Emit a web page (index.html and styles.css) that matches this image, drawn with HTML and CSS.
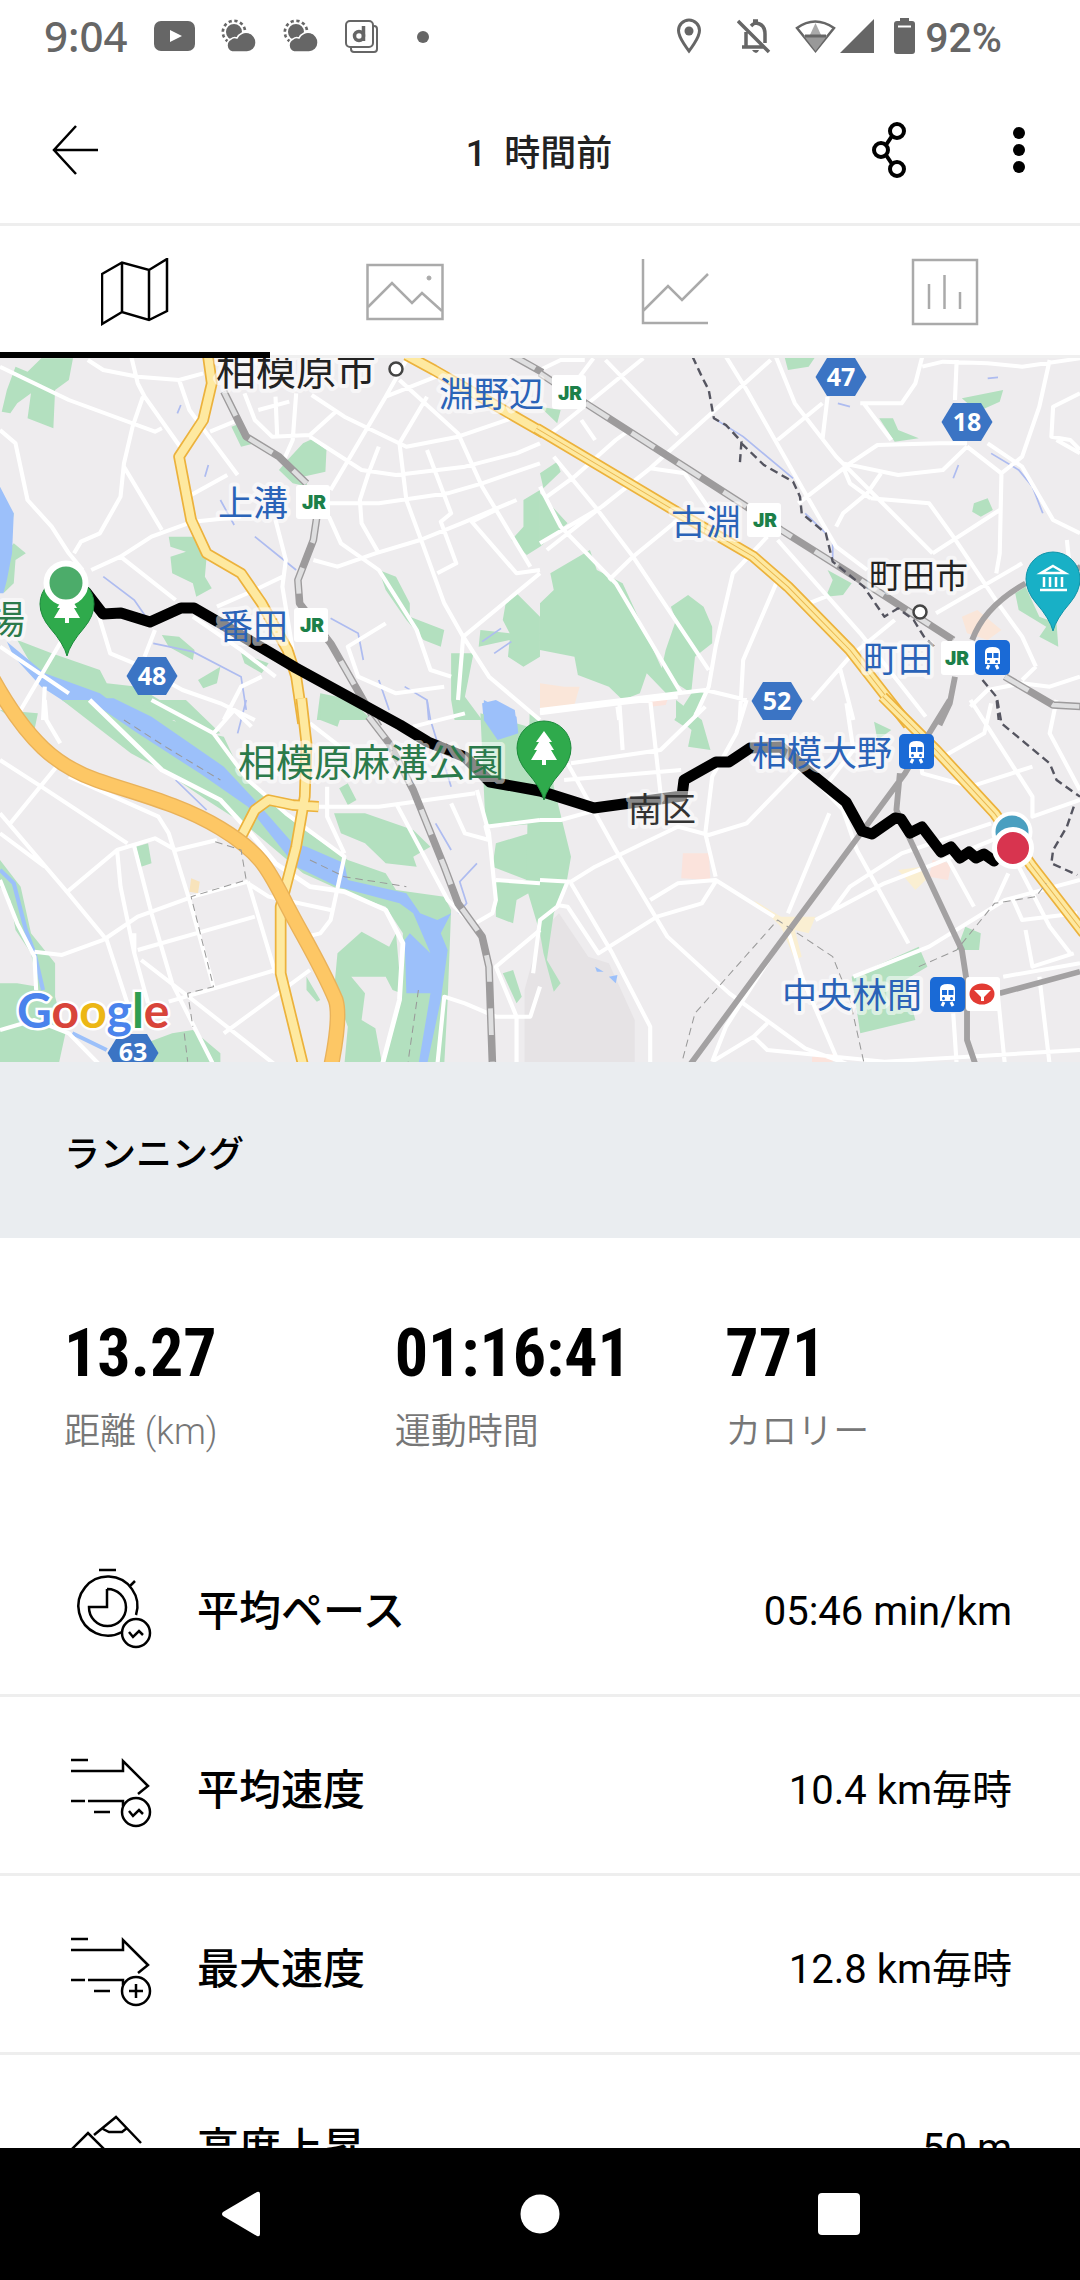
FILE: index.html
```html
<!DOCTYPE html>
<html lang="ja">
<head>
<meta charset="utf-8">
<meta name="viewport" content="width=device-width">
<title>ランニング</title>
<link rel="stylesheet" href="styles.css">
</head>
<body>
<div class="status">
  <div class="status-left">
    <span class="clock">9:04</span>
    <svg width="41" height="32" viewBox="0 0 41 32"><rect y="1" width="41" height="30" rx="7" fill="#666"/><path d="M16 10L28 16L16 22Z" fill="#fff"/></svg>
    <svg width="36" height="34" viewBox="0 0 36 34"><circle cx="13" cy="13" r="10.500" fill="none" stroke="#666" stroke-width="4" stroke-dasharray="3 2.500"/><circle cx="13" cy="13" r="9" fill="#666" stroke="#fff" stroke-width="2"/><path d="M11 33a7 7 0 0 1-1-13a6 6 0 0 1 6-1a10 10 0 0 1 19 5a9 9 0 0 1-9 9Z" fill="#666" stroke="#fff" stroke-width="1.500"/></svg>
    <svg width="36" height="34" viewBox="0 0 36 34"><circle cx="13" cy="13" r="10.500" fill="none" stroke="#666" stroke-width="4" stroke-dasharray="3 2.500"/><circle cx="13" cy="13" r="9" fill="#666" stroke="#fff" stroke-width="2"/><path d="M11 33a7 7 0 0 1-1-13a6 6 0 0 1 6-1a10 10 0 0 1 19 5a9 9 0 0 1-9 9Z" fill="#666" stroke="#fff" stroke-width="1.500"/></svg>
    <svg width="33" height="33" viewBox="0 0 33 33" fill="none" stroke="#666" stroke-width="2"><rect x="1" y="1" width="27" height="26" rx="4"/><path d="M28 6h1a3 3 0 0 1 3 3v20a3 3 0 0 1-3 3H9a3 3 0 0 1-3-3v-2"/><circle cx="14" cy="16" r="4.500" stroke-width="3.500"/><path d="M18.500 6v15" stroke-width="3.500"/></svg>
    <svg width="50" height="33" viewBox="0 0 50 33"><circle cx="19" cy="17" r="6" fill="#666"/></svg>
  </div>
  <div class="status-right">
    <svg width="60" height="36" viewBox="0 0 60 36"><path d="M12 2a10.500 10.500 0 0 1 10.500 10.500C22.500 20 12 33 12 33S1.500 20 1.500 12.500A10.500 10.500 0 0 1 12 2Z" fill="none" stroke="#666" stroke-width="3"/><circle cx="12" cy="13" r="4.500" fill="#666"/></svg>
    <svg width="58" height="36" viewBox="0 0 58 36" fill="none" stroke="#666" stroke-width="3"><path d="M1 3L32 34M5 29h22M9 29V14M14 8q3-3 5-3q9 1 9 11v9M16 3h5" stroke-width="3.500"/><path d="M15 32h7q-1 3-3 3t-4-3Z" fill="#666" stroke="none"/></svg>
    <svg width="99" height="36" viewBox="0 0 99 36" fill="#666"><path d="M20.500 33L2 10Q20 -3 39 10Z" fill="none" stroke="#666" stroke-width="2.500"/><path d="M20.500 5L27 19H14Z" fill="#aaa"/><path d="M9 18H32L20.500 33Z" fill="#999"/><path d="M10 18H31" stroke="#666" stroke-width="3"/><path d="M45 35L79 1V35Z"/></svg>
    <svg width="31" height="36" viewBox="0 0 31 36" fill="#666"><rect x="6" y="0" width="9" height="5"/><rect y="3" width="21" height="33" rx="3"/><path d="M4 8.500h13" stroke="#fff" stroke-width="2"/></svg>
    <span class="battery">92%</span>
  </div>
</div>

<header class="bar">
  <button class="icon-btn back" aria-label="戻る"><svg width="48" height="50" viewBox="0 0 48 50" fill="none" stroke="#000" stroke-width="2.500"><path d="M24 1L2 25L24 49M2 25H46"/></svg></button>
  <h1>1&nbsp;&nbsp;時間前</h1>
  <div class="actions">
    <button class="icon-btn" aria-label="共有"><svg width="34" height="56" viewBox="0 0 34 56" fill="none" stroke="#000" stroke-width="4"><circle cx="25" cy="9" r="7"/><circle cx="9" cy="28" r="7"/><circle cx="25" cy="47" r="7"/><path d="M14 23L20 14M14 33L20 42"/></svg></button>
    <button class="icon-btn" aria-label="メニュー"><svg width="14" height="56" viewBox="0 0 14 56"><circle cx="7" cy="11" r="6"/><circle cx="7" cy="28" r="6"/><circle cx="7" cy="45" r="6"/></svg></button>
  </div>
</header>

<nav class="tabs">
  <button class="tab active" aria-label="マップ"><svg width="68" height="68" viewBox="0 0 68 68" fill="none" stroke="#000" stroke-width="2.500"><path d="M1 16L21 4.500L48 12L66 1V53L48 62L21 54L1 66ZM21 4V54M48 12V62"/></svg></button>
  <button class="tab" aria-label="写真"><svg width="78" height="68" viewBox="0 0 78 68" fill="none" stroke="#aaa" stroke-width="2.500"><rect x="1.500" y="7" width="75" height="54"/><path d="M2 49L26 25L46 45L56 35L76 53"/><circle cx="63" cy="20" r="2" fill="#aaa" stroke-width="1"/></svg></button>
  <button class="tab" aria-label="グラフ"><svg width="68" height="68" viewBox="0 0 68 68" fill="none" stroke="#aaa" stroke-width="2.500"><path d="M2 1V65H67M2 53L27 28L41 42L67 16"/></svg></button>
  <button class="tab" aria-label="統計"><svg width="68" height="68" viewBox="0 0 68 68" fill="none" stroke="#aaa" stroke-width="2.500"><rect x="2" y="2" width="64" height="64"/><path d="M18 26V51M33.500 17V51M49 34V51"/></svg></button>
</nav>

<main class="content">
<svg class="map" viewBox="0 358 1080 704" preserveAspectRatio="xMidYMid slice" role="img" aria-label="ルートマップ">
  <defs>
    <path id="hex" d="M-14 -19H14L25.500 0L14 19H-14L-25.500 0Z" fill="#3b74c4"/>
    <g id="train"><rect width="35" height="35" rx="5" fill="#1a6ad6"/><path d="M10 12q0-5 7.500-5t7.500 5v12h-15Z" fill="#fff"/><path d="M12 13h5v5h-5ZM18.500 13h5v5h-5Z" fill="#1a6ad6"/><circle cx="13.500" cy="21.500" r="1.500" fill="#1a6ad6"/><circle cx="21.500" cy="21.500" r="1.500" fill="#1a6ad6"/><path d="M12 29l2-4M23 29l-2-4" stroke="#fff" stroke-width="3"/></g>
    <path id="pin" d="M0 52Q-3 40-17 24Q-27 12-27 0A27 27 0 0 1 27 0Q27 12 17 24Q3 40 0 52Z"/>
    <path id="tree" d="M0 -18L8 -7H5L10 1H7L13 11H2V16H-2V11H-13L-7 1H-10L-5 -7H-8Z" fill="#fff"/>
    <rect id="plate" width="34" height="34" rx="3" fill="#fff"/>
    <path id="rTL" d="M650 155L715 290L810 350L890 430M920 530L910 600L865 720L870 790L960 910L1060 1090L1100 1160M1485 45L1575 97"/>
    <path id="rTR" d="M0 100L140 195L600 500L700 570L900 700L1200 900M1350 1010L1490 1095L1575 1100"/>
    <path id="rBL" d="M1070 50L1130 130L1200 270L1290 500L1330 610L1400 710L1420 800L1430 1095"/>
    <path id="yTL" d="M603 40L615 130L590 240L520 350L555 540L600 640L700 700L760 790L835 930L860 1010L880 1150M1180 45L1260 90L1580 280"/>
    <path id="yTR" d="M-10 265L380 505L620 650L720 740L900 930L1070 1155"/>
    <path id="yBL" d="M875 -5L890 130L885 290L860 440L815 620L815 820L880 1095M700 410L740 330L780 300L850 315L925 320"/>
    <path id="yBR" d="M995 -10L1150 150L1320 340L1430 500L1580 700"/>
  </defs>
  <rect y="340" width="1080" height="740" fill="#eeecee"/>

  <g class="land" transform="translate(0 340) scale(.34437 .33333)">
    <path class="green" d="M5 215L20 150L45 80L80 95L120 55L212 55L200 120L160 150L155 265L80 235L90 160L50 190L30 220ZM672 260L700 250L740 310L700 320ZM835 360L880 310L905 298L948 330L945 395L880 410L895 440L850 430L810 390ZM490 590L585 590L600 650L595 710L615 745L570 770L560 730L500 700L495 650L540 635L495 620ZM40 610L75 640L45 660L40 730L10 760L15 640ZM0 500L40 520L20 640L0 650ZM1100 690L1150 710L1190 790L1190 830L1290 870L1280 920L1230 900L1180 840L1120 750ZM1568 450L1520 480L1520 560L1485 600L1530 645L1568 620ZM1500 760L1568 830L1568 950L1520 980L1475 950L1480 900L1390 920L1395 870L1480 880L1460 840L1470 780ZM1310 940L1375 940L1350 1070L1400 1140L1320 1140L1310 1080ZM50 900L150 940L290 990L310 1030L400 1040L560 1140L300 1140L180 1050L100 990ZM470 885L520 890L565 930L560 960L490 920ZM575 1020L640 980L630 1030L590 1045ZM700 940L780 970L760 1000L710 970ZM930 1060L980 1070L1040 1100L1080 1140L920 1140Z"/>
    <path class="water" d="M0 440L40 520L35 640L20 720L10 760L0 760ZM20 905L130 1000L290 1060L420 1160L300 1160L120 1040L40 950ZM1400 1090L1440 1080L1495 1110L1500 1150L1405 1150Z"/>
    <path class="stream" d="M300 710L390 780L430 840M445 910L560 935L700 1010L715 1110M740 590L860 690M960 835L1040 880L1055 960M515 220L525 195M595 410L605 375M640 480L680 555M1100 1020L1130 1110M1175 1040L1240 1080L1245 1140M1400 905L1455 865M1435 940L1485 905"/>
  </g>
  <g class="land" transform="translate(540 340) scale(.34437 .33333)">
    <path class="green" d="M0 460L80 550L0 620ZM0 400L50 365L60 395L10 445ZM30 700L145 630L165 690L240 730L360 1000L410 1050L380 1075L310 1000L290 1060L240 1080L200 1040L110 1005L100 950L0 930L0 790L40 750ZM365 930L395 840L380 800L430 765L475 800L500 860L500 910L450 950L440 1050L480 1060L460 1100L420 1160L390 1140L440 1060L350 1000ZM710 50L800 50L780 80L720 90ZM985 235L1025 235L1040 270L1100 295L1030 305ZM1225 175L1345 150L1335 185L1270 215ZM1260 490L1300 475L1315 510L1280 530L1255 515ZM835 690L905 730L880 765L830 770L850 720ZM1380 760L1410 740L1450 830L1500 850L1505 920L1450 890L1470 860L1390 810ZM0 200L60 210L50 250Z"/>
    <path d="M0 1030L70 1040L115 1040L100 1095L0 1110ZM1225 830L1270 810L1340 870L1300 900L1240 880Z" fill="#fae6d9"/>
    <path class="stream" d="M505 235L590 290L735 415M770 520L850 600L850 660M1310 340L1390 390L1430 440L1460 520M865 190L900 200M1300 115L1330 112M1200 415L1215 375"/>
  </g>
  <g class="land" transform="translate(0 700) scale(.34437 .33333)">
    <path class="green" d="M180 0L380 0L560 90L650 110L700 220L770 290L870 380L1010 480L1120 520L1150 570L1290 590L1310 630L1300 900L1290 1095L1110 1095L1165 900L1170 700L1120 620L1000 575L880 520L720 380L600 300L480 215L380 160ZM970 340L1060 340L1200 390L1250 440L1200 470L1210 500L1120 490L1060 430L990 400ZM985 265L1010 250L1035 300L1010 315ZM1395 40L1568 90L1568 370L1450 380L1410 380ZM1440 430L1568 390L1568 560L1500 600L1490 670L1440 650L1440 540L1530 540L1430 500ZM1050 695L1130 740L1150 700L1165 880L1140 870L1120 830L1020 830L1060 880L1050 960L1090 985L1110 1095L1000 1095L1010 980L970 870L980 760ZM395 440L430 430L440 490L410 500ZM0 480L60 560L90 700L160 790L160 890L190 1000L170 1095L0 1095L0 850L50 850L110 860L90 760L45 690L30 600L0 560ZM370 1050L500 1000L560 990L640 1060L640 1095L310 1095ZM0 30L110 40L100 90L40 60ZM890 830L930 900L920 905L890 870ZM1460 820L1490 810L1515 890L1500 910ZM440 0L540 0L640 100L560 110ZM930 0L1000 20L980 80L930 60Z"/>
    <path class="water" d="M250 -5L330 -5L440 50L650 200L740 300L850 430L890 440L1000 490L1010 540L1180 580L1220 640L1270 660L1310 640L1280 700L1300 750L1280 900L1240 1095L1215 1095L1250 880L1180 880L1175 720L1190 700L1250 760L1200 640L1160 610L980 560L860 500L720 320L580 220L400 100ZM1405 0L1500 50L1505 100L1445 120L1405 60Z"/>
    <path class="stream" d="M510 240L600 330M715 0L690 100M1265 370L1310 450M1385 490L1335 545L1355 610L1330 640M1240 0L1250 60L1310 260"/>
    <path class="brook" d="M0 510L40 550L75 690L100 760L125 870M210 1000L310 1050"/>
    <path d="M555 535L580 545L575 580L550 575Z" fill="#f8e3bb"/>
  </g>
  <g class="land" transform="translate(540 700) scale(.34437 .33333)">
    <path d="M55 640L140 770L200 790L275 960L275 1095L-45 1095L-45 870L0 700Z" fill="#e6e3e5"/>
    <path class="green" d="M-30 30L20 90L40 260L90 470L75 560L40 640L20 780L60 850L40 875L10 760L0 700L-40 560ZM395 0L470 60L495 150L430 140L440 90L395 50ZM905 830L1100 740L1125 800L1060 840L1090 960L930 1000ZM1210 750L1235 680L1280 700L1275 750ZM970 65L1020 90L980 120Z"/>
    <path d="M415 460L490 460L495 540L410 535ZM1140 480L1195 490L1185 540L1130 530ZM310 0L370 0L365 15L320 20ZM790 1070L860 1060L850 1085L790 1090Z" fill="#fbe3dc"/>
    <path d="M620 600L700 650L800 650L780 700L740 690L760 770L740 780L700 680ZM1040 510L1110 500L1130 530L1090 570Z" fill="#faefd2"/>
    <path class="water" d="M160 800L185 815L165 815ZM200 830L225 825L220 850Z"/>
  </g>

  <g class="roads" transform="translate(0 340) scale(.34437 .33333)">
    <path d="M0 80L200 180L450 275L470 265M255 60L300 90L400 110L520 120L590 100M380 45L400 130L420 170L540 345M415 170L385 260L360 370L350 470L290 580L235 605L215 640M0 270L45 310L80 480L150 560L200 640L240 690M360 380L470 570M265 690L350 650L440 590L560 545L700 530M350 650L510 780M520 120L550 210L600 280L690 405M610 275L680 245M555 465L660 405M710 160L740 240L790 290L900 285L975 215M860 160L850 300L820 370M800 170L805 290M750 210L840 185M905 165L1000 230L1180 320L1330 290L1500 230M900 290L1050 390L1150 405L1350 380L1500 340L1568 310M1290 100L1120 170L960 450M1120 170L1180 60M1160 120L1330 280L1400 440L1540 680M1240 170L1160 310L1180 480L1230 620L1290 790L1345 890L1420 1010L1568 1140M1100 320L1070 400L1045 480L1050 550L1100 640M950 490L1100 490L1300 460L1400 430L1568 370M1240 330L1310 520L1280 545L1325 670L1270 700M910 660L980 680L1090 640L1220 600L1340 550L1500 480M1440 510L1370 545L1500 700L1568 690M1568 700L1345 890L1330 1080M800 540L830 660L820 740L850 930M630 800L740 750L820 710M955 530L990 610L1100 690L1210 870L1250 990L1310 1010M1120 850L1010 920L1040 1010L1150 1060L1290 1040M560 830L700 930L800 1010M270 770L320 940L390 970L530 1050L640 1090L740 1140M450 870L420 950M180 900L60 1110M0 920L200 1060M130 1040L125 1140M650 1140L700 1040L760 1010"/>
  </g>
  <g class="roads" transform="translate(540 340) scale(.34437 .33333)">
    <path d="M0 90L60 60L130 60M155 55L115 110M190 60L400 285M300 55L20 290M670 60L320 385L20 630M540 50L600 150L770 460L860 620L950 690M685 50L740 190L860 350L1140 640M1110 50L1090 130L1050 190L930 190M1110 80L1170 65L1300 70L1400 80L1568 55M1210 60L1205 180M835 170L820 300M820 190L690 300M940 190L1020 300M750 490L900 370L980 315L1160 310L1240 310M1240 320L1170 390L1040 405L880 370M990 400L950 460L880 520L860 560M880 380L900 430L960 475M1240 320L1340 400L1335 640L1325 700M1340 400L1400 350L1450 200L1480 60M1300 310L1400 380L1490 540L1568 580M1568 160L1490 200L1485 290L1540 300L1568 330M960 475L1130 490L1200 590L1330 790L1400 890L1440 980M1140 640L1335 510M1150 820L1400 670M120 240L160 300M0 440L60 560L220 730L410 1060M40 350L160 500L270 650L490 990M20 470L100 410L220 300L260 270M0 610L180 500L320 385L420 400L500 520M200 720L270 650L400 540M660 590L560 700L510 920L490 1040L450 1130M690 600L930 880L1120 1130M690 720L590 960L580 1140M780 790L830 770M0 1110L400 1060L480 1050L600 1080M790 1080L900 950L1030 840M870 980L910 1140M1250 1100L1300 1050L1400 1030L1480 1040L1568 1010M1440 980L1400 1020M225 1100L230 1140M1530 600L1540 700M1568 340L1500 300"/>
  </g>
  <g class="roads" transform="translate(0 700) scale(.34437 .33333)">
    <path d="M130 0L135 60L175 130M0 180L120 260L370 430M180 180L30 370M0 340L190 570L310 720L370 910M0 400L130 500M190 580L340 450L450 415L510 450L630 420M200 230L460 350L490 400L550 600M340 450L350 560L390 760L430 910M390 440L440 640L500 850L620 1095M390 760L390 700M300 720L180 765L100 755M0 540L50 670L100 770L105 870M300 720L400 650L560 590L720 545M400 750L740 650M720 545L800 820M410 780L560 900L800 1095M490 905L640 860L800 810M650 1000L900 810M550 600L620 860M720 550L780 590L960 630M440 0L620 100L720 240L830 340L1000 470L960 660L930 700L890 710M620 100L680 30L730 80M890 320L1100 320L1380 280M950 260L950 350L1000 460M900 70L1000 150M1150 310L1300 600L1400 700M1310 310L1350 400L1420 420L1410 380L1568 360M1385 270L1420 400L1440 600L1430 640L1380 670M1440 540L1568 550M1270 1095L1290 890L1350 910L1440 950L1540 950L1568 860M1568 690L1440 800L1500 950L1500 1095M0 990L100 960L200 1000L290 1095M1200 80L1350 40"/>
    <path d="M260 0L470 210L640 300L720 390L800 490L900 560L1000 575L1120 630L1170 730L1160 900L1110 1095" stroke-width="14"/>
  </g>
  <g class="roads" transform="translate(540 700) scale(.34437 .33333)">
    <path d="M0 40L230 10L400 -10M230 0L240 150M90 190L350 150L480 20M70 240L410 210M320 0L350 280M80 190L220 450L370 710L550 880L770 1045L900 1095M0 540L90 545L160 500L300 430L400 380L490 405L600 370L760 200M0 360L60 360L200 320M600 0L570 100L500 230L480 400L510 530M320 600L400 550L510 540L680 650M80 545L50 620L0 660L-20 820M50 615L80 620L170 760L340 650L470 610L510 545M90 550L210 760L320 980L320 1095M780 220L880 330L920 450L1070 730M840 340L720 640M720 690L760 830L860 1070M800 660L1000 550L1150 490L1360 400M850 630L900 560L1050 460L1310 370M910 830L1130 740L1350 600L1568 540M1100 130L1110 220L1250 260L1430 200M1180 470L1260 620M1370 590L1400 660L1560 640M1360 440L1480 680L1540 760M1410 690L1430 800L1550 760M1345 830L1568 790M1450 830L1480 1095M1330 890L1350 1095M1200 940L1210 1095M500 1085L620 1010L660 970M620 1010L660 1050L1000 1085L1568 1050M1250 0L1430 290L1430 350L1568 300M1310 10L1290 100L1170 170M1500 0L1480 100L1568 270M890 10L910 150L820 270M1360 520L1320 610M720 690L540 980L500 1085"/>
  </g>

  <g class="rails" transform="translate(0 340) scale(.34437 .33333)"><use href="#rTL" class="rail"/><use href="#rTL" class="rail-dash"/><use href="#yTL" class="yellow-edge"/><use href="#yTL" class="yellow"/></g>
  <g class="rails" transform="translate(540 340) scale(.34437 .33333)"><use href="#rTR" class="rail"/><use href="#rTR" class="rail-dash"/><use href="#yTR" class="yellow-edge"/><use href="#yTR" class="yellow"/><path class="yellow-mid" d="M-10 265L380 505L620 650L720 740L900 930L1070 1155"/>
    <path class="line" d="M1255 900Q1290 800 1410 730M1540 700L1570 680M1205 1010L1190 1090L1160 1155"/>
    <path class="border" d="M443 50L470 110L490 150L505 235L540 255L585 305L580 375M585 310L650 375L735 425L755 470L760 520L830 580L850 665L940 740L1000 830L1040 805L1085 840L1115 890L1150 925M1285 1020L1325 1070L1332 1140"/></g>
  <g class="rails" transform="translate(0 700) scale(.34437 .33333)"><use href="#rBL" class="rail"/><use href="#rBL" class="rail-dash"/><use href="#yBL" class="yellow-edge"/><use href="#yBL" class="yellow"/>
    <path class="motor-edge" d="M-30 -80C80 130 170 200 280 240S520 310 640 385S780 510 830 610S930 790 975 900Q990 950 962 1095"/><path class="motor" d="M-30 -80C80 130 170 200 280 240S520 310 640 385S780 510 830 610S930 790 975 900Q990 950 962 1095"/>
    <path class="thin" d="M625 425L700 450L715 540L555 590L620 860L545 880L560 980M360 60L480 140L640 240M900 480L1000 530L1180 560M1215 870L1185 1085M535 1000L545 1085"/></g>
  <g class="rails" transform="translate(540 700) scale(.34437 .33333)"><use href="#yBR" class="yellow-edge"/><use href="#yBR" class="yellow"/><path class="yellow-mid" d="M995 -10L1150 150L1320 340L1430 500L1580 700"/>
    <path class="line" d="M1190 0L1130 100L1060 220L435 1095M1045 220L1035 330L1080 430L1225 750L1240 850L1240 1020L1265 1095M1335 880L1568 815"/>
    <path class="border" d="M1328 0L1340 70L1480 190L1500 240L1568 290M1550 320L1530 380L1490 450L1485 490L1560 525"/>
    <path class="thin" d="M415 1075L450 940L690 660L850 770L900 900L940 1085M1100 800L1210 750L1320 610L1440 590L1470 550"/></g>

  <polyline class="route" points="86,592 103,614 121,613 150,622 181,608 194,608 220,623 296,668 400,725 428,742 465,757 490,782 540,791 594,808 682,796 684,780 716,762 729,762 750,748 781,747 809,772 846,802 862,831 872,834 895,818 901,819 910,833 922,827 941,852 951,847 960,858 969,852 976,858 984,854 994,861"/>

  <g class="halo">
    <text class="city" x="216" y="385">相模原市</text>
    <text class="station" x="439" y="407">淵野辺</text>
    <text class="station" x="218" y="516">上溝</text>
    <text class="station" x="218" y="639">番田</text>
    <text class="park" x="-13" y="633">場</text>
    <text class="park" x="238" y="776">相模原麻溝公園</text>
    <text class="ward" x="628" y="822">南区</text>
    <text class="station" x="752" y="766">相模大野</text>
    <text class="station" x="782" y="1008">中央林間</text>
    <text class="station" x="671" y="535">古淵</text>
    <text class="station" x="863" y="672">町田</text>
    <text class="town" x="869" y="588">町田市</text>
  </g>
  <g fill="#fff" stroke="#444" stroke-width="2.500"><circle cx="396" cy="369" r="6.500"/><circle cx="920" cy="612" r="6.500"/></g>

  <g class="jr">
    <use href="#plate" x="552" y="375"/><text x="570" y="400">JR</text>
    <use href="#plate" x="296" y="485"/><text x="314" y="509">JR</text>
    <use href="#plate" x="294" y="608"/><text x="312" y="632">JR</text>
    <use href="#plate" x="747" y="503"/><text x="765" y="527">JR</text>
    <use href="#plate" x="941" y="641"/><text x="957" y="665">JR</text>
  </g>
  <use href="#train" x="975" y="640"/><use href="#train" x="899" y="734"/><use href="#train" x="930" y="977"/>
  <use href="#plate" x="966" y="977"/><ellipse cx="982" cy="994" rx="12.500" ry="10.500" fill="#e23b33"/><path d="M974 990L991 990L984 997V1001H981V997Z" fill="#fff"/>

  <g class="shield">
    <use href="#hex" x="152" y="676"/><text x="152" y="685">48</text>
    <use href="#hex" x="841" y="377"/><text x="841" y="386">47</text>
    <use href="#hex" x="967" y="422"/><text x="967" y="431">18</text>
    <use href="#hex" x="777" y="701"/><text x="777" y="710">52</text>
    <use href="#hex" x="133" y="1053"/><text x="133" y="1061">63</text>
  </g>

  <use href="#pin" x="67" y="604" fill="#2faa4c" stroke="#1c8a3b"/><use href="#tree" x="67" y="607"/>
  <use href="#pin" x="544" y="748" fill="#2faa4c" stroke="#1c8a3b"/><use href="#tree" x="544" y="749"/>
  <use href="#pin" x="1053" y="579" fill="#18b0c6" stroke="#0f93a8"/>
  <path d="M1053 566L1065 573H1041ZM1040 590H1067M1044 577V587M1050 577V587M1056 577V587M1062 577V587" fill="none" stroke="#fff" stroke-width="2.500"/>
  <circle cx="66" cy="583" r="19.500" fill="#4cac6a" stroke="#fff" stroke-width="6"/>
  <circle cx="1012" cy="832" r="18.500" fill="#4a9fc0" stroke="#fff" stroke-width="4"/>
  <circle cx="1013" cy="848" r="18.500" fill="#d8344f" stroke="#fff" stroke-width="5"/>

  <text class="google" x="17" y="1028"><tspan fill="#4a83ec">G</tspan><tspan fill="#d8443a">o</tspan><tspan fill="#ecb716">o</tspan><tspan fill="#4a83ec">g</tspan><tspan fill="#2f9e50">l</tspan><tspan fill="#d8443a">e</tspan></text>
</svg>

<section class="sport"><h2>ランニング</h2></section>

<dl class="metrics">
  <div><dd>13.27</dd><dt>距離 (km)</dt></div>
  <div><dd>01:16:41</dd><dt>運動時間</dt></div>
  <div><dd>771</dd><dt>カロリー</dt></div>
</dl>

<ul class="rows">
  <li><svg width="90" height="90" viewBox="0 0 90 90"><path d="M70 54A29.500 29.500 0 1 0 56 71M33 9H50M63 26L69 20M41 28V46H23A18.500 18.500 0 1 0 41 28"/><circle cx="70" cy="72" r="14"/><path d="M63 71L67 76L73 70L77 74"/></svg><span class="name">平均ペース</span><span class="value">05:46 min/km</span></li>
  <li><svg width="90" height="90" viewBox="0 0 90 90"><path d="M5 20H22M5 31H57V21L82 46L72 54M5 61H19M22 61H57V66M28 72H44"/><circle cx="70" cy="72" r="14"/><path d="M63 71L67 76L73 70L77 74"/></svg><span class="name">平均速度</span><span class="value">10.4 km毎時</span></li>
  <li><svg width="90" height="90" viewBox="0 0 90 90"><path d="M5 20H22M5 31H57V21L82 46L72 54M5 61H19M22 61H57V66M28 72H44"/><circle cx="70" cy="72" r="14"/><path d="M63 72H77M70 65V79"/></svg><span class="name">最大速度</span><span class="value">12.8 km毎時</span></li>
  <li><svg width="90" height="90" viewBox="0 0 90 90"><path d="M28 37L50 19L75 45M37 31L43 34H56L61 30M1 56L22 35L43 56"/></svg><span class="name">高度上昇</span><span class="value">50 m</span></li>
</ul>
</main>

<footer class="navbar">
  <button class="icon-btn" aria-label="戻る"><svg width="40" height="46" viewBox="0 0 40 46"><path d="M2 21Q0 23 2 25L36 45Q39 46 39 43V3Q39 0 36 1Z" fill="#fff"/></svg></button>
  <button class="icon-btn" aria-label="ホーム"><svg width="40" height="40" viewBox="0 0 40 40"><circle cx="20" cy="20" r="19.500" fill="#fff"/></svg></button>
  <button class="icon-btn" aria-label="履歴"><svg width="42" height="42" viewBox="0 0 42 42"><rect width="42" height="42" rx="4" fill="#fff"/></svg></button>
</footer>
</body>
</html>
```
FILE: styles.css
```css
* { box-sizing: border-box; }
body {
  margin: 0;
  height: 100vh;
  display: flex;
  flex-direction: column;
  overflow: hidden;
  background: #fff;
  color: #000;
  font-family: Roboto, "Noto Sans CJK JP", sans-serif;
}
svg { display: block; flex: none; }
h1, h2, dl, dd, dt, ul { margin: 0; padding: 0; font-weight: 500; }
button { border: 0; padding: 0; background: none; }

.status {
  flex: none;
  height: 72px;
  padding: 0 78px 0 44px;
  display: flex;
  align-items: center;
  justify-content: space-between;
  color: #666;
  font-size: 42px;
  line-height: 48px;
}
.status-left, .status-right { display: flex; align-items: center; }
.status-left { gap: 26px; }
.clock { font-family: "Noto Sans", sans-serif; font-weight: 500; }
.battery { padding-top: 4px; font-weight: 500; font-size: 41px; }

.bar {
  flex: none;
  height: 154px;
  padding: 4px 54px 0 52px;
  border-bottom: 3px solid #eee;
  display: grid;
  grid-template-columns: 1fr auto 1fr;
  align-items: center;
}
.bar h1 { font-size: 36px; line-height: 48px; padding-top: 8px; color: #222; }
.back { justify-self: start; }
.actions { justify-self: end; display: flex; gap: 106px; }

.tabs {
  flex: none;
  height: 132px;
  display: grid;
  grid-template-columns: repeat(4, 1fr);
}
.tab {
  display: flex;
  align-items: center;
  justify-content: center;
  padding-top: 3px;
  border-bottom: 3px solid #f0f0f0;
}
.tab.active { padding-top: 6px; border-bottom: 6px solid #000; }

.content { flex: 1; min-height: 0; overflow: hidden; }
.map { width: 100%; height: auto; aspect-ratio: 1080 / 704; }
.green { fill: #b3e0bf; }
.water { fill: #9cc0fa; }
.stream { fill: none; stroke: #aebcf0; stroke-width: 5; }
.brook { fill: none; stroke: #9cc0fa; stroke-width: 12; }
.roads { fill: none; stroke: #fff; stroke-width: 12; stroke-linejoin: round; }
.rails { fill: none; stroke-linejoin: round; }
.rail { stroke: #9d9b9c; stroke-width: 22; }
.rail-dash { stroke: #dfdfe0; stroke-width: 14; stroke-dasharray: 80 80; }
.yellow-edge { stroke: #ecb23c; stroke-width: 34; }
.yellow { stroke: #fee9a0; stroke-width: 24; }
.yellow-mid { stroke: #e9b852; stroke-width: 3; }
.motor-edge { stroke: #e9b25a; stroke-width: 46; }
.motor { stroke: #fdc765; stroke-width: 38; }
.line { stroke: #a3a1a2; stroke-width: 17; }
.border { stroke: #555560; stroke-width: 7; stroke-dasharray: 24 14; }
.thin { stroke: #999; stroke-width: 3; stroke-dasharray: 22 14; }
.route { fill: none; stroke: #000; stroke-width: 11; stroke-linejoin: round; stroke-linecap: round; }
.halo text {
  font-family: "Noto Sans CJK JP", sans-serif;
  paint-order: stroke;
  stroke: rgba(255, 255, 255, .55);
  stroke-width: 8px;
  stroke-linejoin: round;
}
.city { font-size: 40px; fill: #222; }
.station { font-size: 35px; fill: #2a63b8; }
.park { font-size: 38px; fill: #2b7a4b; }
.ward { font-size: 34px; fill: #333; }
.town { font-size: 33px; fill: #222; }
.jr text { font-family: Inter, sans-serif; font-size: 19px; font-weight: 900; fill: #1c8049; text-anchor: middle; }
.shield text { font-family: "Noto Sans", sans-serif; font-size: 25px; font-weight: 700; fill: #fff; text-anchor: middle; }
.google {
  font-family: Lato, sans-serif;
  font-size: 48px;
  font-weight: 700;
  paint-order: stroke;
  stroke: #fff;
  stroke-width: 5px;
}

.sport {
  height: 176px;
  padding: 10px 64px 0;
  background: #eaedf0;
  display: flex;
  align-items: center;
}
.sport h2 { font-size: 36px; line-height: 52px; }

.metrics {
  height: 280px;
  padding: 72px 24px 0 64px;
  display: grid;
  grid-template-columns: repeat(3, 1fr);
}
.metrics div { display: flex; flex-direction: column; }
.metrics dd {
  font-family: "Roboto Condensed", "Liberation Sans Narrow", "Liberation Sans", sans-serif;
  font-size: 66px;
  line-height: 88px;
  font-weight: 700;
}
.metrics dt { margin-top: 8px; font-size: 36px; line-height: 52px; font-weight: 350; color: #777; }

.rows { list-style: none; }
.rows li {
  height: 179px;
  padding: 0 68px 0 66px;
  border-bottom: 3px solid #eee;
  display: flex;
  align-items: center;
}
.rows svg { fill: none; stroke: #000; stroke-width: 2.500; }
.name { margin-left: 41px; font-size: 42px; line-height: 60px; font-weight: 500; padding-top: 12px; }
.value { margin-left: auto; font-size: 40px; line-height: 60px; font-weight: 400; padding-top: 12px; }

.navbar {
  flex: none;
  height: 132px;
  padding: 0 91px;
  background: #000;
  display: grid;
  grid-template-columns: repeat(3, 1fr);
  align-items: center;
  justify-items: center;
}
```
